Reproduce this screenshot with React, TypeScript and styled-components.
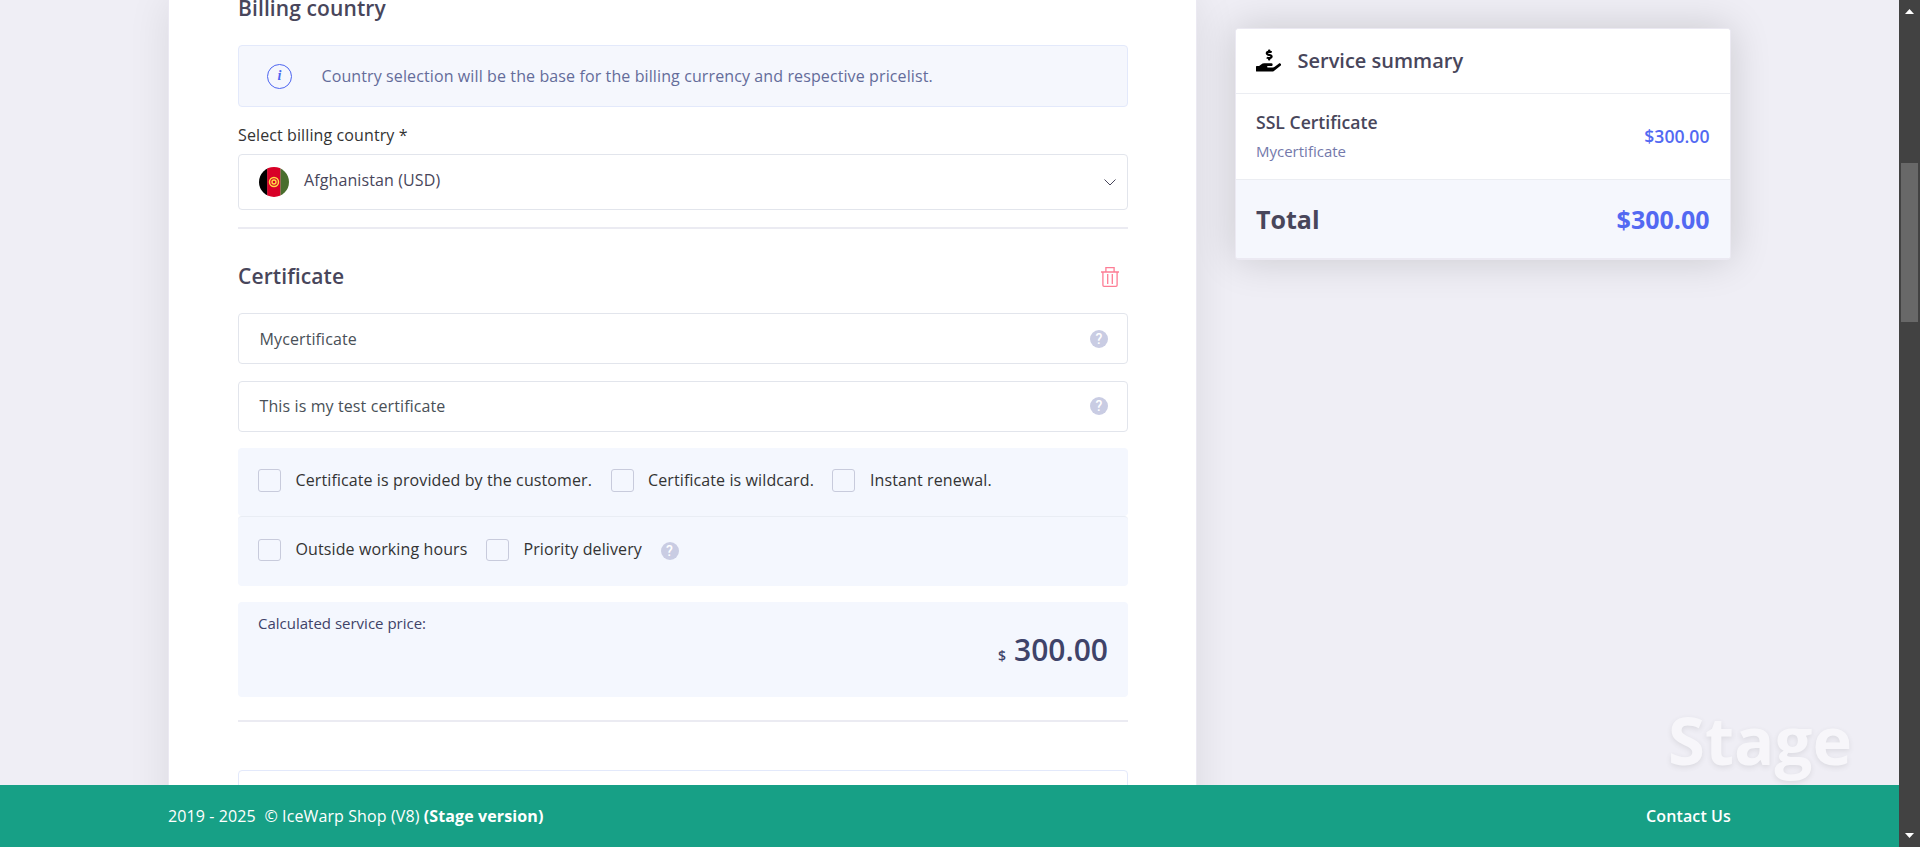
import React from "react";
import styled, { createGlobalStyle } from "styled-components";
import { FaHandHoldingUsd } from "react-icons/fa";

const GlobalStyle = createGlobalStyle`
  * { box-sizing: border-box; }
  body {
    margin: 0;
    font-family: "Open Sans", "Liberation Sans", sans-serif;
    font-size: 16px;
    letter-spacing: 0.11px;
    font-feature-settings: "liga" 1;
    color: #48465b;
    background: #efeef5;
    overflow: hidden;
  }
`;

const Screen = styled.div`
  display: grid;
  grid-template-columns: 1fr 21px;
  height: 847px;
`;

const Page = styled.div`
  position: relative;
  display: flex;
  flex-direction: column;
  min-width: 0;
  height: 847px;
`;

const Content = styled.div`
  flex: 1;
  min-height: 0;
  display: flex;
  justify-content: space-between;
  align-items: flex-start;
  padding: 0 168px;
  overflow: hidden;
`;

const Main = styled.main`
  width: 1029px;
  height: 900px;
  padding: 0 68px 0 69px;
  background: #fff;
  border: solid #ebe9f2;
  border-width: 0 1px;
  box-shadow: 0 0 40px rgba(0, 0, 0, 0.09);
`;

const Heading = styled.h2`
  margin: 0;
  font-size: 21px;
  line-height: 16px;
  font-weight: 600;
  color: #48465b;
`;

const Info = styled.div`
  display: flex;
  align-items: center;
  height: 62px;
  margin-top: 29px;
  padding-left: 28px;
  border: 1px solid #e3e9fb;
  border-radius: 4px;
  background: #f5f7fd;
  color: #646c9a;
`;

const InfoIcon = styled.span`
  width: 25px;
  height: 25px;
  margin-right: 29.5px;
  border: 1px solid #4d65f0;
  border-radius: 50%;
  font: italic bold 14px/22px "Liberation Serif", serif;
  text-align: center;
  color: #4d65f0;
`;

const Label = styled.div`
  margin-top: 16px;
  height: 31px;
  line-height: 24px;
  color: #333;
`;

const Select = styled.div`
  display: flex;
  align-items: center;
  height: 56px;
  padding: 0 11px 0 20px;
  border: 1px solid #e2e5ec;
  border-radius: 4px;
`;

const SelectText = styled.span`
  flex: 1;
  padding: 0 0 5px 15px;
  color: #48465b;
`;

const Divider = styled.div<{ $top: number }>`
  height: 2px;
  margin-top: ${(p) => p.$top}px;
  background: #ebebf2;
`;

const SectionHead = styled.div`
  display: flex;
  justify-content: space-between;
  align-items: center;
  height: 84px;
  padding: 10px 9px 0 0;
  svg { margin-top: 2px; }
`;

const Field = styled.div<{ $last?: boolean }>`
  display: flex;
  justify-content: space-between;
  align-items: center;
  height: 51px;
  margin-bottom: ${(p) => (p.$last ? 16 : 17)}px;
  padding: 0 19px ${(p) => (p.$last ? 1 : 0)}px 20.5px;
  border: 1px solid #e2e5ec;
  border-radius: 4px;
  color: #495057;
`;

const Options = styled.div<{ $second?: boolean }>`
  display: flex;
  height: ${(p) => (p.$second ? 70 : 68)}px;
  padding: ${(p) => (p.$second ? 22 : 20)}px 20px 0;
  border-top: 1px solid ${(p) => (p.$second ? "#e9edf4" : "#f4f7fe")};
  border-radius: 4px;
  background: #f4f7fe;
  --box: ${(p) => (p.$second ? 22 : 23)}px;
  --line: ${(p) => (p.$second ? 20 : 22)}px;
`;

const Option = styled.label`
  display: flex;
  align-items: flex-start;
  margin-right: 18.5px;
  line-height: var(--line);
  color: #333;
`;

const Box = styled.span`
  width: 23px;
  height: var(--box);
  margin-right: 14.5px;
  border: 1px solid #c8cbdc;
  border-radius: 3px;
`;

const HelpSlot = styled.span`
  display: flex;
  padding-top: 3px;
`;

const Price = styled.div`
  display: flex;
  flex-direction: column;
  height: 95px;
  margin-top: 16px;
  padding: 10px 20px 0;
  border-radius: 4px;
  background: #f4f7fe;
  color: #3f4369;
  font-size: 15px;
  line-height: 22px;
  letter-spacing: 0;
`;

const Amount = styled.div`
  display: flex;
  justify-content: flex-end;
  align-items: baseline;
  gap: 8px;
  font-size: 30px;
  line-height: 32px;
  font-weight: 600;
`;

const Currency = styled.span`
  font-size: 14px;
`;

const NextBox = styled.div`
  height: 80px;
  margin-top: 48px;
  border: 1px solid #e3e9fb;
  border-radius: 4px;
`;

const Summary = styled.aside`
  width: 496px;
  height: 232px;
  margin-top: 28px;
  border: 1px solid #ebe9f2;
  border-bottom-width: 2px;
  border-radius: 4px;
  background: #fff;
  box-shadow: 0 0 40px rgba(0, 0, 0, 0.16);
  letter-spacing: 0;
  overflow: hidden;
  flex-shrink: 0;
`;

const SummaryRow = styled.div<{ $height: number; $total?: boolean }>`
  display: flex;
  align-items: center;
  justify-content: space-between;
  height: ${(p) => p.$height}px;
  padding: 0 20.5px ${(p) => (p.$total ? 0 : 2)}px 20px;
  border-bottom: ${(p) => (p.$total ? "0" : "1px solid #ebedf2")};
  background: ${(p) => (p.$total ? "#f5f7fd" : "#fff")};
  font-size: ${(p) => (p.$total ? 25 : 17.6)}px;
  font-weight: ${(p) => (p.$total ? 700 : 600)};
`;

const SummaryTitle = styled.div`
  display: flex;
  align-items: center;
  gap: 16.5px;
  font-size: 20px;
  svg { color: #000; }
`;

const Item = styled.div`
  display: flex;
  flex-direction: column;
  line-height: 30px;
`;

const ItemNote = styled.span`
  font-size: 15px;
  line-height: 28px;
  font-weight: 400;
  color: #7479ab;
`;

const Money = styled.span`
  color: #5369f2;
`;

const Footer = styled.footer`
  display: flex;
  justify-content: space-between;
  align-items: center;
  height: 62px;
  padding: 0 168px;
  background: #17a086;
  color: #fff;
  white-space: pre;
`;

const Contact = styled.span`
  font-weight: 600;
`;

const Stage = styled.div`
  position: absolute;
  right: 47px;
  bottom: 64px;
  font-size: 67px;
  line-height: 88px;
  letter-spacing: 0;
  font-weight: 700;
  color: #fff;
  opacity: 0.5;
  text-shadow: 0 2px 5px rgba(0, 0, 0, 0.16);
`;

const Track = styled.div`
  display: flex;
  flex-direction: column;
  justify-content: space-between;
  align-items: center;
  padding: 9px 0;
  background: #424242;
`;

const Thumb = styled.div`
  width: 17px;
  height: 159px;
  margin: 149px 0 auto;
  background: #686868;
`;

const Arrow = ({ down }: { down?: boolean }) => (
  <svg width="9" height="5" viewBox="0 0 9 5" fill="#fff">
    <path d={down ? "M0 0H9L4.5 5Z" : "M0 5H9L4.5 0Z"} />
  </svg>
);

const HelpMark = styled.span`
  width: 18px;
  height: 18px;
  border-radius: 50%;
  background: #c9cce3;
  color: #fff;
  font: 500 14px/18px Roboto, sans-serif;
  letter-spacing: 0;
  text-align: center;
`;

const Help = () => <HelpMark>?</HelpMark>;

const Flag = () => (
  <svg width="30" height="30" viewBox="0 0 30 30">
    <clipPath id="flag"><circle cx="15" cy="15" r="15" /></clipPath>
    <g clipPath="url(#flag)">
      <path d="M0 0H8.5V30H0Z" fill="#000" />
      <path d="M8.2 0H21.6V30H8.2Z" fill="#d80027" />
      <path d="M21.5 0H30V30H21.5Z" fill="#496e2d" />
    </g>
    <circle cx="15" cy="15" r="4.5" fill="none" stroke="#ffda44" strokeWidth="1.5" />
    <circle cx="15" cy="15" r="2" fill="none" stroke="#ffda44" strokeWidth="1.4" />
  </svg>
);

const Chevron = () => (
  <svg width="12" height="7" viewBox="0 0 12 7" fill="none" stroke="#48465b" strokeWidth="1">
    <path d="M0.5 0.5L6 6L11.5 0.5" />
  </svg>
);

const Trash = () => (
  <svg width="18" height="20" viewBox="0 0 18 20" fill="none" stroke="#fd7d95" strokeWidth="1.3">
    <path d="M0 5H18M4.9 4.6V0.7H13.1V4.6M1.9 5V18.2Q1.9 19.3 3 19.3H15Q16.1 19.3 16.1 18.2V5M6.7 7V17M11.3 7V17" />
  </svg>
);

const Check = ({ children }: { children: string }) => (
  <Option><Box />{children}</Option>
);

export default function App() {
  return (
    <Screen>
      <GlobalStyle />
      <Page>
        <Content>
          <Main>
            <Heading>Billing country</Heading>
            <Info>
              <InfoIcon>i</InfoIcon>
              Country selection will be the base for the billing currency and respective pricelist.
            </Info>
            <Label>Select billing country *</Label>
            <Select>
              <Flag />
              <SelectText>Afghanistan (USD)</SelectText>
              <Chevron />
            </Select>
            <Divider $top={17} />
            <SectionHead>
              <Heading>Certificate</Heading>
              <Trash />
            </SectionHead>
            <Field>Mycertificate<Help /></Field>
            <Field $last>This is my test certificate<Help /></Field>
            <Options>
              <Check>Certificate is provided by the customer.</Check>
              <Check>Certificate is wildcard.</Check>
              <Check>Instant renewal.</Check>
            </Options>
            <Options $second>
              <Check>Outside working hours</Check>
              <Check>Priority delivery</Check>
              <HelpSlot><Help /></HelpSlot>
            </Options>
            <Price>
              Calculated service price:
              <Amount><Currency>$</Currency>300.00</Amount>
            </Price>
            <Divider $top={23} />
            <NextBox />
          </Main>
          <Summary>
            <SummaryRow $height={65}>
              <SummaryTitle><FaHandHoldingUsd size={25} />Service summary</SummaryTitle>
            </SummaryRow>
            <SummaryRow $height={86}>
              <Item>SSL Certificate<ItemNote>Mycertificate</ItemNote></Item>
              <Money>$300.00</Money>
            </SummaryRow>
            <SummaryRow $height={78} $total>
              <span>Total</span>
              <Money>$300.00</Money>
            </SummaryRow>
          </Summary>
        </Content>
        <Footer>
          <span>2019 - 2025  © IceWarp Shop (V8) <b>(Stage version)</b></span>
          <Contact>Contact Us</Contact>
        </Footer>
        <Stage>Stage</Stage>
      </Page>
      <Track>
        <Arrow />
        <Thumb />
        <Arrow down />
      </Track>
    </Screen>
  );
}
